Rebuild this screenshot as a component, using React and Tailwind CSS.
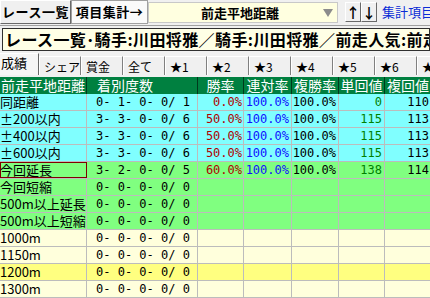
import React from 'react';

const rows = [
  { name: '同距離', cnt: '0- 1- 0- 0/ 1', win: '0.0%', ren: '100.0%', fuku: '100.0%', tan: '0', fv: '110', bg: 'bg-[#80ffff]' },
  { name: '±200以内', cnt: '3- 3- 0- 0/ 6', win: '50.0%', ren: '100.0%', fuku: '100.0%', tan: '115', fv: '113', bg: 'bg-[#80ffff]' },
  { name: '±400以内', cnt: '3- 3- 0- 0/ 6', win: '50.0%', ren: '100.0%', fuku: '100.0%', tan: '115', fv: '113', bg: 'bg-[#80ffff]' },
  { name: '±600以内', cnt: '3- 3- 0- 0/ 6', win: '50.0%', ren: '100.0%', fuku: '100.0%', tan: '115', fv: '113', bg: 'bg-[#80ffff]' },
  { name: '今回延長', cnt: '3- 2- 0- 0/ 5', win: '60.0%', ren: '100.0%', fuku: '100.0%', tan: '138', fv: '114', bg: 'bg-[#80ff80]', sel: true },
  { name: '今回短縮', cnt: '0- 0- 0- 0/ 0', bg: 'bg-[#80ff80]' },
  { name: '500m以上延長', cnt: '0- 0- 0- 0/ 0', bg: 'bg-[#80ff80]' },
  { name: '500m以上短縮', cnt: '0- 0- 0- 0/ 0', bg: 'bg-[#80ff80]' },
  { name: '1000m', cnt: '0- 0- 0- 0/ 0', bg: 'bg-[#ffffdc]' },
  { name: '1150m', cnt: '0- 0- 0- 0/ 0', bg: 'bg-[#ffffdc]' },
  { name: '1200m', cnt: '0- 0- 0- 0/ 0', bg: 'bg-[#ffff80]' },
  { name: '1300m', cnt: '0- 0- 0- 0/ 0', bg: 'bg-[#ffffdc]' },
];

const tabs = ['シェア', '賞金', '全て', '★1', '★2', '★3', '★4', '★5', '★6', '★7'];

const num = "font-['DejaVu_Sans_Mono',monospace] text-[12px] whitespace-pre";

export default function App() {
  return (
    <div className="w-[430px] h-[298px] overflow-hidden bg-[#f0f0f0] font-['Noto_Sans_CJK_JP',sans-serif] text-black">
      {/* toolbar */}
      <div className="flex items-start h-[26px] border-b border-[#a0a0a0]">
        <button className="shrink-0 w-[71px] h-[24px] border border-t-white border-l-white border-r-[#696969] border-b-[#696969] bg-[#f0f0f0] text-[13px] font-bold leading-[20px] tracking-[0.5px]">
          レース一覧
        </button>
        <button className="shrink-0 w-[77px] h-[24px] border border-[#a0a0a0] bg-[#fafafa] text-[13px] font-bold leading-[20px] tracking-[0.5px]">
          項目集計→
        </button>
        <div className="relative shrink-0 w-[190px] h-[21px] mt-[2px] bg-[#ffffe0] border border-[#c8c8c8] text-[13px] font-bold leading-[19px] text-center">
          <span className="pr-[6px]">前走平地距離</span>
          <svg className="absolute right-[4px] top-[6px]" width="10" height="8" viewBox="0 0 10 8">
            <polygon points="0,0 10,0 5,8" fill="#8c8c8c" />
          </svg>
        </div>
        <button className="shrink-0 ml-[7px] mt-[2px] w-[16px] h-[20px] border border-t-white border-l-white border-r-[#696969] border-b-[#696969] text-[14px] font-bold leading-[16px]">↑</button>
        <button className="shrink-0 mt-[2px] w-[16px] h-[20px] border border-t-white border-l-white border-r-[#696969] border-b-[#696969] text-[14px] font-bold leading-[16px]">↓</button>
        <span className="ml-[5px] mt-[4px] text-[13px] leading-[16px] text-[#0a2cd6] whitespace-nowrap">集計項目</span>
      </div>

      {/* condition bar */}
      <div className="ml-[2px] mt-[2px] h-[23px] border border-[#303030] bg-[#ffffe6] text-[16px] font-bold leading-[20px] whitespace-nowrap overflow-hidden pl-[2px] tracking-[0.4px]">
        レース一覧･騎手:川田将雅／騎手:川田将雅／前走人気:前走平地距離
      </div>

      {/* tabs */}
      <div className="flex items-end h-[23px] mt-[1px] text-[12px] leading-[16px] overflow-hidden">
        <div className="shrink-0 w-[39px] h-[22px] bg-[#f6f6f6] border-t border-t-white border-r border-r-[#696969] pl-[1px] pt-[1px] text-[13px] whitespace-nowrap">成績</div>
        {tabs.map((t) => (
          <div key={t} className="shrink-0 w-[42px] h-[19px] border-t border-l border-t-white border-l-white border-r border-r-[#808080] pl-[4px] pt-[2px] whitespace-nowrap overflow-hidden">
            {t}
          </div>
        ))}
      </div>

      {/* table */}
      <div className="mt-[2px] w-[440px]">
        <div className="flex h-[17px] bg-[#008040] text-white text-[14px] leading-[17px]">
          <div className="shrink-0 w-[87px] border-r border-[#003a1c] pl-px whitespace-nowrap">前走平地距離</div>
          <div className="shrink-0 w-[111px] border-r border-[#003a1c] pl-[10px]">着別度数</div>
          <div className="shrink-0 w-[46px] border-r border-[#003a1c] text-center">勝率</div>
          <div className="shrink-0 w-[48px] border-r border-[#003a1c] text-center">連対率</div>
          <div className="shrink-0 w-[47px] border-r border-[#003a1c] text-center">複勝率</div>
          <div className="shrink-0 w-[46px] border-r border-[#003a1c] text-center">単回値</div>
          <div className="shrink-0 w-[55px] pl-[2px]">複回値</div>
        </div>
        {rows.map((r) => (
          <div key={r.name} className={`flex h-[17px] border-b border-[#bcbcbc] ${r.bg} leading-[16px]`}>
            <div className={`shrink-0 w-[87px] border-r border-[#bcbcbc] text-[13px] whitespace-nowrap ${r.sel ? 'outline outline-1 -outline-offset-1 outline-[#800000]' : ''}`}>
              {r.name}
            </div>
            <div className={`shrink-0 w-[111px] border-r border-[#bcbcbc] pl-[9px] ${num}`}>{r.cnt}</div>
            <div className={`shrink-0 w-[46px] border-r border-[#bcbcbc] text-right pr-[1px] text-[#b00000] ${num}`}>{r.win}</div>
            <div className={`shrink-0 w-[48px] border-r border-[#bcbcbc] text-right pr-[2px] text-[#1010ff] ${num}`}>{r.ren}</div>
            <div className={`shrink-0 w-[47px] border-r border-[#bcbcbc] text-right pr-[2px] ${num}`}>{r.fuku}</div>
            <div className={`shrink-0 w-[46px] border-r border-[#bcbcbc] text-right pr-[2px] text-[#008000] ${num}`}>{r.tan}</div>
            <div className={`shrink-0 w-[46px] text-right pr-[2px] ${num}`}>{r.fv}</div>
          </div>
        ))}
      </div>
    </div>
  );
}
